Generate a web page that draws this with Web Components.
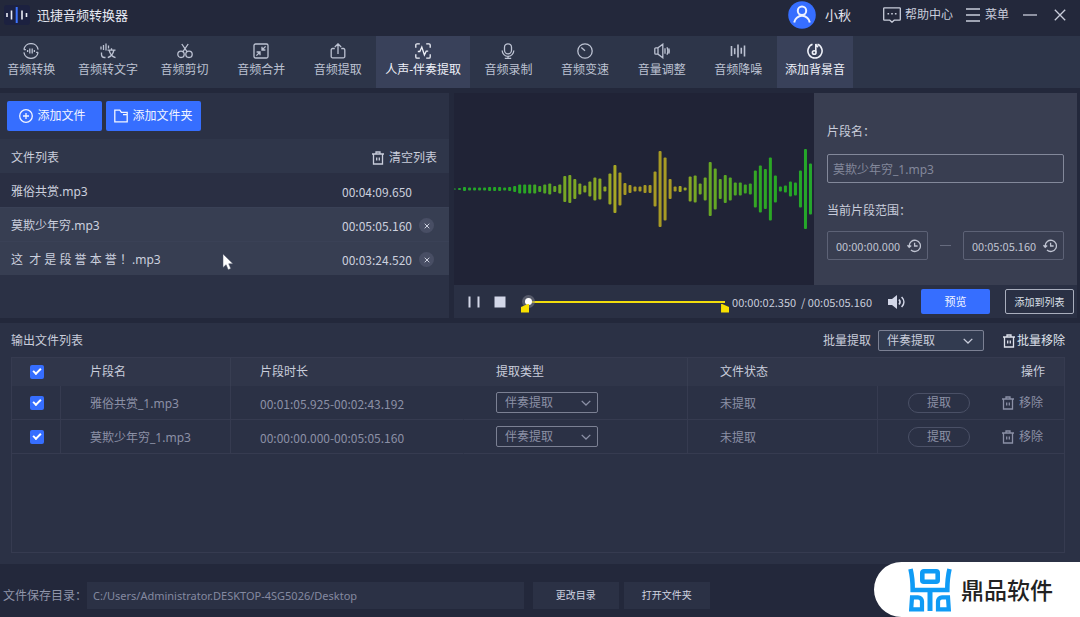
<!DOCTYPE html>
<html lang="zh-CN">
<head>
<meta charset="utf-8">
<meta name="viewport" content="width=device-width, initial-scale=1">
<title>迅捷音频转换器</title>
<style>
  html, body { margin: 0; }
  body {
    --bg: #23283b;
    --panel: #2b3145;
    --panel-hi: #30364a;
    --line: #363b50;
    --blue: #366eff;
    --text: #c9cddb;
    --dim: #8b90a6;
    --digits: "Noto Sans CJK SC", "Noto Sans", sans-serif;
    background: var(--bg);
    color: var(--text);
    font: 12px/16px "Noto Sans", "Noto Sans CJK SC", sans-serif;
  }
</style>
</head>
<body>
<audio-app></audio-app>

<script>
const BASE = `
  *, *::before, *::after { box-sizing: border-box; }
  button, input, select { font: inherit; color: inherit; margin: 0; }
  button { background: none; border: 0; padding: 0; display: inline-flex; align-items: center; justify-content: center; white-space: nowrap; cursor: pointer; }
`;

function define(name, css, html, setup) {
  const template = document.createElement('template');
  template.innerHTML = `<style>${BASE}${css}</style>${html}`;
  customElements.define(name, class extends HTMLElement {
    constructor() {
      super();
      this.attachShadow({ mode: 'open' }).append(template.content.cloneNode(true));
    }
    connectedCallback() {
      if (setup && !this.ready) setup.call(this, this.shadowRoot);
      this.ready = true;
    }
  });
}

/* name: [width, height, markup] */
const ICONS = {
  convert: [16, 16, '<path d="M.9 6.6A7.2 7.2 0 0 1 15.1 6.6M15.1 9.4A7.2 7.2 0 0 1 .9 9.4M.9 6.6h2M15.1 9.4h-2M4.6 7v2M6.8 5.5v5M9.2 5.5v5M11.4 7v2"/>'],
  totext: [16, 16, '<path d="M1 3.5v3M3.5 2v5M6 .5v7M8.5 2.5v3M1.5 9.5v2a3 3 0 0 0 3 3h1M7.5 7.2h8M11.5 5.2v2M13.8 7.5c-.8 3.8-3 6-6 7.2M9.2 7.5c.8 3.4 3 6 6.3 7.2"/>'],
  cut: [16, 16, '<circle cx="4" cy="11.3" r="3.2"/><circle cx="12" cy="11.3" r="3.2"/><path d="M4.8 1l5.4 7.8M11.2 1L5.8 8.8"/>'],
  merge: [16, 16, '<rect x="1" y="1" width="14" height="14" rx="1.5"/><path d="M12.6 3.4L9 7M9 3.8V7h3.4M3.4 12.6L7 9M3.6 9H7v3.2"/>'],
  extract: [16, 16, '<path d="M4.8 5.5H2.6A1.4 1.4 0 0 0 1.2 7v6.3a1.4 1.4 0 0 0 1.4 1.5h10.8a1.4 1.4 0 0 0 1.4-1.5V7a1.4 1.4 0 0 0-1.4-1.5h-2.2M8 11V1.2M4.8 4L8 .9 11.2 4"/>'],
  vocal: [16, 16, '<path d="M.8 4.8V2A1.2 1.2 0 0 1 2 .8h2.8M11.2.8H14A1.2 1.2 0 0 1 15.2 2v2.8M15.2 11.2V14a1.2 1.2 0 0 1-1.2 1.2h-2.8M4.8 15.2H2A1.2 1.2 0 0 1 .8 14v-2.8M2.8 8.5h2L6.8 4l2.6 8 1.8-3.8h2"/>'],
  record: [16, 16, '<rect x="4.5" y=".8" width="7" height="10" rx="3.5"/><path d="M2.2 7.5a5.8 5.8 0 0 0 11.6 0M8 13.3v2M4.8 15.3h6.4"/>'],
  speed: [16, 16, '<circle cx="8" cy="8" r="7.2"/><path d="M4.3 4.6L8 7.8"/>'],
  volume: [16, 16, '<path d="M4 4.8L8.8 1.2v13.6L4 11.2H1.8a1 1 0 0 1-1-1V5.8a1 1 0 0 1 1-1H4zM4 5v6M11 5.2v5.6M13 4.2c1 2.4 1 5.2 0 7.6M14.8 5.4c.6 1.8.6 3.4 0 5.2"/>'],
  denoise: [16, 16, '<path d="M1.5 3v10M4.7 5.2v6M8 1.5v13M11.3 4.8v6M14.5 2.5v11" stroke-width="1.6"/>'],
  music: [16, 16, '<g stroke-width="1.6"><path d="M5.5 1.3A7.1 7.1 0 1 0 10.5 1.3M8.8 9.2V.9c.2 1.4.9 2.4 2.4 3"/><circle cx="7.2" cy="9.5" r="1.8"/></g>'],
  plus: [14, 14, '<circle cx="7" cy="7" r="6.3"/><path d="M7 4v6M4 7h6"/>'],
  folder: [14, 14, '<path d="M.8 12.8V1.2h5l1.6 2.2h5.8v9.4zM9 5.6h4"/>'],
  trash: [12, 14, '<path d="M0 3h12M4 2.8V1h4v1.8M1.5 3v10h9V3M4.7 6.5v3M7.3 6.5v3"/>'],
  chat: [18, 16, '<path d="M1.4.8h15.2a.7.7 0 0 1 .7.7v11a.7.7 0 0 1-.7.7h-5.4L9 15.2l-2.2-2H1.4a.7.7 0 0 1-.7-.7v-11A.7.7 0 0 1 1.4.8z"/><path d="M4.500 6.800h1.600M8.200 6.800h1.600M11.900 6.800h1.600" stroke-width="1.6"/>'],
  menu: [14, 14, '<path d="M0 1h14M0 7h14M0 13h14"/>'],
  minimize: [14, 14, '<path d="M0 7h14"/>'],
  close: [12, 12, '<path d="M.8.8l10.4 10.4M11.2.8L.8 11.2"/>'],
  remove: [6, 6, '<path d="M.7.7l4.6 4.6M5.3.7L.7 5.3" stroke-width="1"/>'],
  user: [28, 28, '<circle cx="14" cy="14" r="13.8" fill="#366eff" stroke="none"/><g stroke="#eef2ff" stroke-width="2"><circle cx="14" cy="9.8" r="4.2"/><path d="M6.2 21.5a7.9 7.9 0 0 1 15.6 0"/></g>'],
  pause: [12, 12, '<path d="M1.5 .5v11M10.5 .5v11" stroke-width="2"/>'],
  stop: [12, 12, '<path d="M.5 .5h11v11H.5z" fill="currentColor" stroke="none"/>'],
  speaker: [18, 14, '<path d="M0 4h4l5-4v14l-5-4H0z" fill="currentColor" stroke="none"/><path d="M11 4.5c1.4 1.6 1.4 3.4 0 5M13.6 2c3 3 3 7 0 10" stroke-width="1.6"/>'],
  history: [14, 14, '<path d="M2.2 8.2V7A5.6 5.6 0 1 1 4 11M.4 6.3l1.8 2 2-1.8M7.6 3.8V7h3" stroke-width="1.3"/>'],
  chevron: [10, 6, '<path d="M.7 .9L5 5 9.3 .9"/>'],
  pointer: [12, 17, '<path d="M1 0v13.5l3.1-2.8 2.1 5 2.6-1.1-2.1-4.8H11z" fill="#fff" stroke="#4b5064" stroke-width=".5"/>'],
  wave: [26, 20, '<rect width="26" height="20" rx="3" fill="#1c2140" stroke="none"/><g stroke="#e9ecf6" stroke-width="1.6"><path d="M3 8v4M7.5 5.5v9M18 5.5v9M22.5 8v4"/></g><path d="M12.7 2v16" stroke="#3d74ff" stroke-width="2"/>'],
  brand: [44, 44, '<g stroke="#0f9bf5" stroke-width="4.6"><path d="M2.5 1C4.200 8 4.700 14 4.700 22h34.600C39.300 14 39.800 8 41.500 1"/><rect x="14.300" y="3.300" width="15.400" height="10.400" rx="1.500"/><path d="M22 22v21" stroke-width="5"/><path d="M4 29.300h6a4 4 0 0 1 4 4v8H3.200zM40 29.300h-6a4 4 0 0 0-4 4v8h10.800z" stroke-width="4.200"/></g>']
};

define('ui-icon', `
  :host { display: block; flex: none; }
  svg { display: block; }
`, `<svg fill="none" stroke="currentColor" stroke-width="1.3" aria-hidden="true"></svg>`, function (root) {
  const [w, h, markup] = ICONS[this.getAttribute('name')];
  const svg = root.querySelector('svg');
  svg.setAttribute('width', w);
  svg.setAttribute('height', h);
  svg.setAttribute('viewBox', `0 0 ${w} ${h}`);
  svg.innerHTML = markup;
});

define('title-bar', `
  :host { display: flex; align-items: center; height: 36px; padding: 0 14px 6px 4px; background: var(--bg); }
  h1 { margin: 0 auto 0 7px; font-size: 13px; line-height: 16px; font-weight: 400; color: #e6e9f2; }
  .user { gap: 9px; font-size: 13px; color: #e3e5ee; margin-right: 32px; }
  .help { gap: 4px; margin-right: 13px; }
  .menu { gap: 5px; margin-right: 14px; }
  .min { margin-right: 17px; }
`, `
  <ui-icon name="wave"></ui-icon>
  <h1>迅捷音频转换器</h1>
  <button class="user"><ui-icon name="user"></ui-icon>小秋</button>
  <button class="help"><ui-icon name="chat"></ui-icon>帮助中心</button>
  <button class="menu"><ui-icon name="menu"></ui-icon>菜单</button>
  <button class="min" aria-label="最小化"><ui-icon name="minimize"></ui-icon></button>
  <button aria-label="关闭"><ui-icon name="close"></ui-icon></button>
`);

define('tool-item', `
  :host { display: block; flex: 1; min-width: 0; color: #bcc2d2; }
  :host([wide]) { flex: 0 0 94px; }
  :host([active]) { background: #39415a; color: #eef0f8; }
  button { width: 100%; height: 52px; flex-direction: column; gap: 3px; padding-bottom: 3px; }
`, `<button><span><slot></slot></span></button>`, function (root) {
  const icon = document.createElement('ui-icon');
  icon.setAttribute('name', this.getAttribute('icon'));
  root.querySelector('button').prepend(icon);
});

define('tool-nav', `
  :host { display: block; background: #2d3549; overflow: hidden; }
  nav { display: flex; width: calc(79% + 7px); min-width: 860px; margin-left: -7px; }
`, `
  <nav>
    <tool-item icon="convert">音频转换</tool-item>
    <tool-item icon="totext">音频转文字</tool-item>
    <tool-item icon="cut">音频剪切</tool-item>
    <tool-item icon="merge">音频合并</tool-item>
    <tool-item icon="extract">音频提取</tool-item>
    <tool-item icon="vocal" wide active>人声-伴奏提取</tool-item>
    <tool-item icon="record">音频录制</tool-item>
    <tool-item icon="speed">音频变速</tool-item>
    <tool-item icon="volume">音量调整</tool-item>
    <tool-item icon="denoise">音频降噪</tool-item>
    <tool-item icon="music" active>添加背景音</tool-item>
  </nav>
`);

define('file-row', `
  :host { display: flex; align-items: center; height: 34px; padding: 3px 15px 0 11px; background: #2a2f43; color: #ccd0de; }
  :host([lit]) { background: #373e52; box-shadow: inset 0 1px #3a4156; }
  .name { flex: 1; white-space: pre; }
  .time { width: 77px; font-family: var(--digits); }
  button { width: 15px; height: 15px; border-radius: 50%; background: #484e64; visibility: hidden; }
  :host([lit]) button { visibility: visible; }
`, `
  <span class="name"><slot></slot></span>
  <span class="time"><slot name="time"></slot></span>
  <button aria-label="移除文件"><ui-icon name="remove"></ui-icon></button>
`);

define('file-panel', `
  :host { display: block; position: relative; background: var(--panel); }
  .actions { display: flex; gap: 4px; padding: 8px 7px; }
  .actions button { width: 95px; height: 30px; gap: 4px; background: var(--blue); border-radius: 2px; color: #f2f5ff; }
  .actions .file { padding-right: 4px; }
  header { display: flex; justify-content: space-between; align-items: center; height: 34px; padding: 3px 12px 0 11px; background: #2f364a; }
  h2 { margin: 0; font: inherit; }
  header button { gap: 5px; }
  .pointer { position: absolute; left: 222px; top: 161px; }
`, `
  <div class="actions">
    <button class="file"><ui-icon name="plus"></ui-icon>添加文件</button>
    <button><ui-icon name="folder"></ui-icon>添加文件夹</button>
  </div>
  <header><h2>文件列表</h2><button><ui-icon name="trash"></ui-icon>清空列表</button></header>
  <file-row>雅俗共赏.mp3<span slot="time">00:04:09.650</span></file-row>
  <file-row lit>莫欺少年穷.mp3<span slot="time">00:05:05.160</span></file-row>
  <file-row lit>这  才 是 段 誉 本 誉 ！.mp3<span slot="time">00:03:24.520</span></file-row>
  <ui-icon class="pointer" name="pointer"></ui-icon>
`);

/* Heights of the level bars, left to right. */
const LEVELS = [1,2,4,3,3,3,3,4,4,4,3,4,6,9,9,9,9,6,9,11,6,9,26,28,20,11,7,15,23,21,5,31,48,33,12,8,5,5,8,8,35,76,63,20,5,6,3,25,27,11,23,54,41,20,28,23,13,13,9,11,37,47,40,63,27,5,7,15,13,37,80,51,25];

define('wave-view', `
  :host { display: flex; align-items: center; background: #202336; min-width: 0; overflow: hidden; }
  svg { display: block; width: 100%; height: 100px; }
`, `<svg viewBox="0 0 360 100" role="img" aria-label="波形"></svg>`, function (root) {
  const step = 361 / (LEVELS.length - 1);
  const hue = i => {
    const stops = [[0, 124], [14, 118], [22, 82], [30, 72], [33, 54], [44, 54], [48, 82], [55, 98], [61, 116], [72, 124]];
    const k = Math.max(1, stops.findIndex(s => s[0] >= i));
    const [a, b] = [stops[k - 1], stops[k]];
    return a[1] + (b[1] - a[1]) * (i - a[0]) / (b[0] - a[0]);
  };
  root.querySelector('svg').innerHTML = LEVELS.map((h, i) =>
    `<rect x="${i * step - 1}" y="${50 - h / 2}" width="3" height="${h}" rx="1" fill="hsl(${hue(i)} 64% 40%)"/>`).join('');
});

define('clip-form', `
  :host { display: block; padding: 31px 13px 25px; background: #393e51; }
  label { display: block; }
  .name { display: block; width: 100%; height: 29px; margin: 14px 0 20px; padding: 0 5px; border: 1px solid #83889a; border-radius: 2px; background: none; color: #83889b; outline: 0; }
  .range { display: flex; align-items: center; justify-content: space-between; margin-top: 12px; }
  .time { display: flex; align-items: center; width: 101px; height: 29px; padding: 0 6px 0 8px; border: 1px solid #5d6276; border-radius: 2px; color: #c0c4d2; }
  .time input { flex: 1; min-width: 0; width: 66px; border: 0; padding: 0; background: none; font-size: 11px; font-family: var(--digits); outline: 0; }
  .dash { width: 11px; height: 1px; background: #666b7e; }
`, `
  <label for="clip">片段名：</label>
  <input class="name" id="clip" value="莫欺少年穷_1.mp3">
  <label for="from">当前片段范围：</label>
  <div class="range">
    <span class="time"><input id="from" value="00:00:00.000"><ui-icon name="history"></ui-icon></span>
    <span class="dash"></span>
    <span class="time"><input aria-label="结束时间" value="00:05:05.160"><ui-icon name="history"></ui-icon></span>
  </div>
`);

define('player-bar', `
  :host { display: flex; align-items: center; height: 33px; padding: 0 3px 0 14px; background: #2a3044; font-size: 11px; }
  .stop { margin: 0 15px 0 14px; }
  button { color: #d3d7e8; }
  .track { position: relative; flex: 1; display: flex; height: 24px; padding: 0 4px; margin-right: 3px; }
  input { appearance: none; flex: 1; min-width: 0; background: none; }
  input::-webkit-slider-runnable-track { height: 2px; background: #f2dd0d; }
  input::-webkit-slider-thumb { appearance: none; width: 7px; height: 7px; margin-top: -3px; border-radius: 50%; background: #fff; box-shadow: 0 0 0 3px #7d808c88; }
  .mark { position: absolute; top: 14px; width: 8px; height: 9px; background: #f7e000; }
  .in { left: 0; clip-path: polygon(100% 0, 100% 100%, 0 100%, 0 40%); }
  .out { right: 0; clip-path: polygon(0 0, 100% 40%, 100% 100%, 0 100%); }
  .clock { white-space: pre; font-family: var(--digits); }
  .sound { margin: 0 15px 0 16px; }
  .preview { width: 69px; height: 25px; border-radius: 2px; background: var(--blue); color: #f2f5ff; margin-right: 15px; }
  .add { width: 69px; height: 25px; border: 1px solid #a9aebd; border-radius: 2px; color: #dde0ea; font-size: 10px; }
`, `
  <button aria-label="暂停"><ui-icon name="pause"></ui-icon></button>
  <button class="stop" aria-label="停止"><ui-icon name="stop"></ui-icon></button>
  <div class="track">
    <input type="range" min="0" max="305" value="0" aria-label="播放进度">
    <span class="mark in"></span><span class="mark out"></span>
  </div>
  <span class="clock">00:00:02.350  / 00:05:05.160</span>
  <button class="sound" aria-label="音量"><ui-icon name="speaker"></ui-icon></button>
  <button class="preview">预览</button>
  <button class="add">添加到列表</button>
`);

define('type-select', `
  :host { display: inline-grid; align-items: center; width: 102px; height: 21px; }
  :host([large]) { width: 106px; background: #323b50; }
  select { grid-area: 1 / 1; width: 100%; height: 100%; appearance: none; background: none; border: 1px solid #7b8093; border-radius: 2px; padding: 1px 8px 0; line-height: 16px; outline: 0; }
  ui-icon { grid-area: 1 / 1; justify-self: end; margin-right: 7px; pointer-events: none; }
  :host([large]) ui-icon { margin-right: 11px; }
`, `
  <select aria-label="提取类型"><option>伴奏提取</option><option>人声提取</option></select>
  <ui-icon name="chevron"></ui-icon>
`);

define('output-panel', `
  :host { display: flex; flex-direction: column; padding: 7px 15px 11px 11px; background: var(--panel); }
  header { display: flex; align-items: center; height: 21px; margin-bottom: 6px; }
  h2 { margin: 0 auto 0 0; font: inherit; }
  header type-select { margin: 0 19px 0 7px; }
  header button { gap: 2px; color: #dfe2ec; }
  .box { flex: 1; border: 1px solid var(--line); }
  table { width: 100%; table-layout: fixed; border-collapse: separate; border-spacing: 0; }
  th, td { padding: 0; text-align: left; font-weight: 400; }
  th { height: 28px; background: var(--panel-hi); }
  th + th { border-left: 1px solid transparent; }
  td { height: 34px; color: var(--dim); border-bottom: 1px solid var(--line); }
  td + td { border-left: 1px solid var(--line); }
  td:nth-child(4) { border-left-color: transparent; }
  th:nth-child(3), th:nth-child(5) { border-left-color: #383e52; }
  td:nth-child(2), td:nth-child(3), td:nth-child(5) { padding-top: 2px; }
  td:nth-child(3) { font-family: var(--digits); }
  .c1 { width: 48px; } .c2 { width: 170px; } .c3 { width: 233px; } .c4 { width: 224px; } .c5 { width: 190px; } .c6 { width: 187px; }
  :is(th, td):nth-child(1) { padding-left: 18px; }
  :is(th, td):nth-child(2), :is(th, td):nth-child(3) { padding-left: 29px; }
  :is(th, td):nth-child(4), :is(th, td):nth-child(5) { padding-left: 32px; }
  th:last-child { text-align: right; padding-right: 19px; }
  input { display: block; appearance: none; width: 14px; height: 14px; border-radius: 2px; background: var(--blue); }
  input:checked::before { content: ""; display: block; width: 8px; height: 5px; margin: 3px; border: solid #fff; border-width: 0 0 2px 2px; transform: rotate(-45deg); }
  type-select { vertical-align: middle; }
  .ops { display: flex; justify-content: flex-end; align-items: center; gap: 32px; padding-right: 21px; }
  .pill { width: 62px; height: 20px; border: 1px solid #4a5066; border-radius: 10px; }
  .del { gap: 5px; }
`, `
  <header>
    <h2>输出文件列表</h2>
    <span>批量提取</span><type-select large></type-select>
    <button><ui-icon name="trash"></ui-icon>批量移除</button>
  </header>
  <div class="box">
    <table>
      <colgroup><col class="c1"><col class="c2"><col class="c3"><col class="c4"><col class="c5"><col class="c6"></colgroup>
      <thead><tr>
        <th><input type="checkbox" checked aria-label="全选"></th>
        <th>片段名</th><th>片段时长</th><th>提取类型</th><th>文件状态</th><th>操作</th>
      </tr></thead>
      <tbody></tbody>
    </table>
  </div>
`, function (root) {
  const clips = [
    ['雅俗共赏_1.mp3', '00:01:05.925-00:02:43.192'],
    ['莫欺少年穷_1.mp3', '00:00:00.000-00:05:05.160']
  ];
  root.querySelector('tbody').innerHTML = clips.map(([name, span]) => `
    <tr>
      <td><input type="checkbox" checked aria-label="${name}"></td>
      <td>${name}</td><td>${span}</td>
      <td><type-select></type-select></td><td>未提取</td>
      <td><div class="ops"><button class="pill">提取</button><button class="del"><ui-icon name="trash"></ui-icon>移除</button></div></td>
    </tr>`).join('');
});

define('save-bar', `
  :host { display: flex; align-items: center; height: 53px; padding: 9px 0 0 3px; background: var(--bg); font-size: 10px; }
  label { width: 84px; font-size: 12px; color: #9095aa; padding-top: 2px; }
  input { width: calc(40% + 6px); height: 27px; padding: 0 6px; border: 0; background: var(--panel); color: #8489a0; font-size: 11px; margin-right: 9px; outline: 0; }
  button { width: 86px; height: 27px; margin-right: 5px; background: var(--panel); color: #d0d4e0; }
`, `
  <label for="dir">文件保存目录：</label>
  <input id="dir" value="C:/Users/Administrator.DESKTOP-4SG5026/Desktop">
  <button>更改目录</button>
  <button>打开文件夹</button>
`);

define('brand-badge', `
  :host { display: flex; align-items: center; gap: 9px; width: 206px; height: 55px; padding-left: 34px; border-radius: 28px 0 0 28px; background: #fff; color: #222; font-size: 23px; line-height: 32px; font-weight: 500; white-space: nowrap; }
`, `<ui-icon name="brand"></ui-icon><slot></slot>`);

define('audio-app', `
  :host { position: relative; display: flex; flex-direction: column; min-height: 100vh; }
  main { display: grid; grid-template-columns: 449fr 626fr; gap: 5px; padding: 5px 0; }
  .editor { display: grid; grid-template-columns: minmax(0, 1fr) 263px; padding-right: 3px; }
  player-bar { grid-column: 1 / 3; }
  output-panel { flex: 1; }
  brand-badge { position: absolute; right: 0; bottom: 0; }
`, `
  <title-bar></title-bar>
  <tool-nav></tool-nav>
  <main>
    <file-panel></file-panel>
    <section class="editor">
      <wave-view></wave-view>
      <clip-form></clip-form>
      <player-bar></player-bar>
    </section>
  </main>
  <output-panel></output-panel>
  <save-bar></save-bar>
  <brand-badge>鼎品软件</brand-badge>
`);
</script>
</body>
</html>
